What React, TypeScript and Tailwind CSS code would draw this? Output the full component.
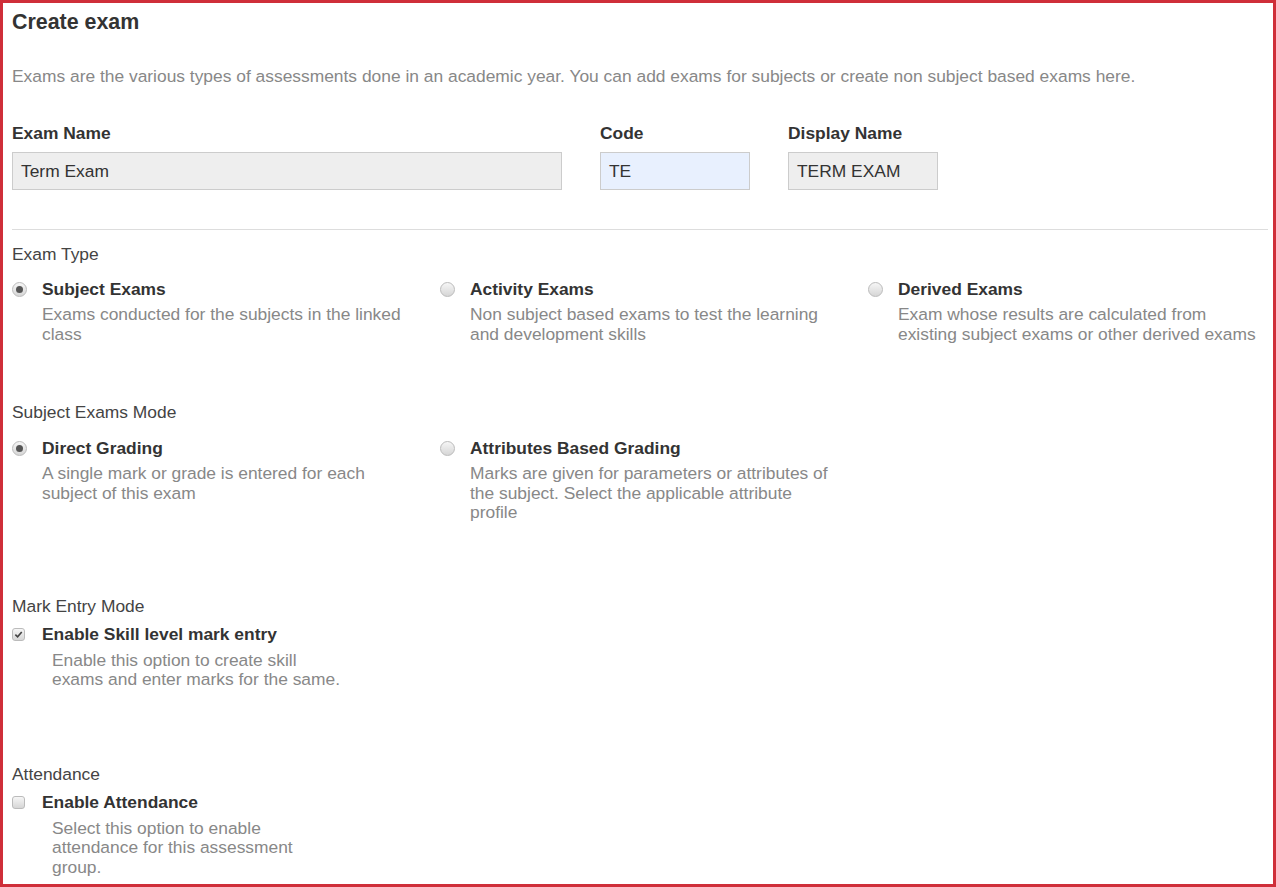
import React from "react";

type Opt = { title: string; desc: string; checked?: boolean };

const examTypes: Opt[] = [
  { title: "Subject Exams", desc: "Exams conducted for the subjects in the linked class", checked: true },
  { title: "Activity Exams", desc: "Non subject based exams to test the learning and development skills" },
  { title: "Derived Exams", desc: "Exam whose results are calculated from existing subject exams or other derived exams" },
];

const modes: Opt[] = [
  { title: "Direct Grading", desc: "A single mark or grade is entered for each subject of this exam", checked: true },
  { title: "Attributes Based Grading", desc: "Marks are given for parameters or attributes of the subject. Select the applicable attribute profile" },
];

function Radio({ checked }: { checked?: boolean }) {
  return (
    <span className="mt-[3px] flex h-[15px] w-[15px] shrink-0 items-center justify-center rounded-full border border-[#bbb] bg-gradient-to-b from-[#f6f6f6] to-[#d6d6d6]">
      {checked && <span className="h-[7px] w-[7px] rounded-full bg-[#555]" />}
    </span>
  );
}

function Check({ checked }: { checked?: boolean }) {
  return (
    <span className="mt-[4px] flex h-[13px] w-[13px] shrink-0 items-center justify-center rounded-[3px] border border-[#bbb] bg-gradient-to-b from-[#f6f6f6] to-[#d6d6d6]">
      {checked && (
        <svg width="9" height="9" viewBox="0 0 10 10">
          <path d="M1.5 5.2 L4 7.6 L8.6 2.2" fill="none" stroke="#444" strokeWidth="1.8" />
        </svg>
      )}
    </span>
  );
}

function RadioOption({ title, desc, checked }: Opt) {
  return (
    <div className="flex gap-[15px]">
      <Radio checked={checked} />
      <div>
        <div className="font-bold leading-[20px] text-[#333]">{title}</div>
        <div className="mt-[6px] w-[364px] leading-[19.5px] text-[#888]">{desc}</div>
      </div>
    </div>
  );
}

function CheckOption({ title, desc, checked }: Opt) {
  return (
    <div>
      <div className="flex gap-[17px]">
        <Check checked={checked} />
        <div className="font-bold leading-[20px] text-[#333]">{title}</div>
      </div>
      <div className="ml-[40px] mt-[7px] w-[292px] leading-[19.5px] text-[#888]">{desc}</div>
    </div>
  );
}

export default function App() {
  return (
    <div className="h-[887px] w-[1276px] overflow-hidden border-[3px] border-[#cf2e39] bg-white font-['Liberation_Sans',Arial,sans-serif] text-[17.4px] text-[#333]">
      <div className="pl-[9px] pr-[5px] pt-[7px]">
        {/* Header */}
        <h1 className="text-[21.4px] font-bold leading-[24px] text-[#333]">Create exam</h1>
        <p className="mt-[32px] leading-[20px] text-[#888]">
          Exams are the various types of assessments done in an academic year. You can add exams for subjects or create non subject based exams here.
        </p>

        {/* Names */}
        <div className="mt-[37px] flex gap-[38px]">
          <div>
            <div className="font-bold leading-[20px]">Exam Name</div>
            <div className="mt-[9px] flex h-[38px] w-[550px] items-center border border-[#ccc] bg-[#eee] px-[8px]">Term Exam</div>
          </div>
          <div>
            <div className="font-bold leading-[20px]">Code</div>
            <div className="mt-[9px] flex h-[38px] w-[150px] items-center border border-[#ccc] bg-[#e8f0fe] px-[8px]">TE</div>
          </div>
          <div>
            <div className="font-bold leading-[20px]">Display Name</div>
            <div className="mt-[9px] flex h-[38px] w-[150px] items-center border border-[#ccc] bg-[#eee] px-[8px]">TERM EXAM</div>
          </div>
        </div>

        <div className="mt-[39px] border-t border-[#ddd]" />

        {/* Exam Type */}
        <div className="mt-[14px] leading-[20px] text-[#444]">Exam Type</div>
        <div className="mt-[15px] grid grid-cols-[428px_428px_1fr]">
          {examTypes.map((o) => (
            <RadioOption key={o.title} {...o} />
          ))}
        </div>

        {/* Subject Exams Mode */}
        <div className="mt-[58px] leading-[20px] text-[#444]">Subject Exams Mode</div>
        <div className="mt-[16px] grid grid-cols-[428px_428px_1fr]">
          {modes.map((o) => (
            <RadioOption key={o.title} {...o} />
          ))}
        </div>

        {/* Mark Entry */}
        <div className="mt-[73px] leading-[20px] text-[#444]">Mark Entry Mode</div>
        <div className="mt-[8px]">
          <CheckOption
            title="Enable Skill level mark entry"
            desc="Enable this option to create skill exams and enter marks for the same."
            checked
          />
        </div>

        {/* Attendance */}
        <div className="mt-[74px] leading-[20px] text-[#444]">Attendance</div>
        <div className="mt-[8px]">
          <CheckOption
            title="Enable Attendance"
            desc="Select this option to enable attendance for this assessment group."
          />
        </div>
      </div>
    </div>
  );
}
